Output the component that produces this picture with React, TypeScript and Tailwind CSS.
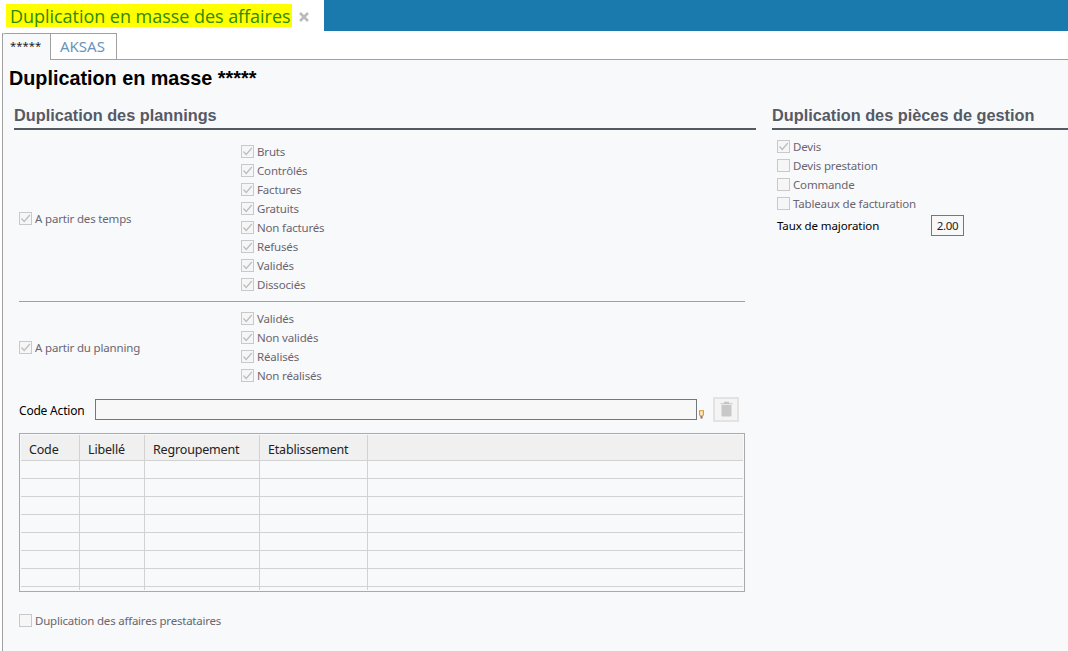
const body = { fontFamily: '"Noto Sans", "Open Sans", sans-serif' };

function Check({ label, checked = true, tight = false }: { label: string; checked?: boolean; tight?: boolean }) {
  return (
    <div className="flex h-[19px] items-center">
      <span className="flex h-[13px] w-[13px] shrink-0 items-center justify-center border border-[#c9c9c9] bg-[#f6f6f6]">
        {checked && (
          <svg width="11" height="11" viewBox="0 0 11 11" fill="none">
            <path d="M1.5 5.5L4.2 8.5L9.8 2" stroke="#bdbdbd" strokeWidth="1.2" />
          </svg>
        )}
      </span>
      <span className={`ml-[3px] whitespace-nowrap pt-[1px] text-[11.5px] text-[#6a6570] ${tight ? "tracking-[-0.22px]" : "tracking-[-0.17px]"}`}>{label}</span>
    </div>
  );
}

function SectionTitle({ children }: { children: string }) {
  return (
    <div className="h-[28px] whitespace-nowrap border-b-2 border-[#555a62] text-[16.3px] font-bold leading-[27px] text-[#555a64]" style={{ fontFamily: '"Liberation Sans", Arial, sans-serif' }}>
      {children}
    </div>
  );
}

const cols = ["w-[59px]", "w-[65px]", "w-[115px]", "w-[108px]", "flex-1"];
const heads = ["Code", "Libellé", "Regroupement", "Etablissement", ""];

function Grid() {
  return (
    <div className="ml-[5px] mt-[11px] h-[159px] w-[726px] overflow-hidden border border-[#a9a9b0] px-[1px] pt-[1px]">
      <div className="flex h-[26px] overflow-hidden border-b border-[#d2d2d2] bg-[#f0f0f0]">
        {heads.map((h, i) => (
          <div key={i} className={`${cols[i]} border-r border-[#d2d2d2] pl-[8px] pt-[2px] text-[12.5px] leading-[25px] tracking-[-0.17px] text-[#222] last:border-r-0`}>
            {h}
          </div>
        ))}
      </div>
      {[0, 1, 2, 3, 4, 5, 6].map((r) => (
        <div key={r} className="flex h-[18px] border-b border-[#d2d2d2]">
          {cols.map((c, i) => (
            <div key={i} className={`${c} border-r border-[#d2d2d2] last:border-r-0`} />
          ))}
        </div>
      ))}
      <div className="flex h-[3px]">
        {cols.map((c, i) => (
          <div key={i} className={`${c} border-r border-[#d2d2d2] last:border-r-0`} />
        ))}
      </div>
    </div>
  );
}

export default function App() {
  return (
    <div className="h-[651px] w-[1068px] overflow-hidden bg-white" style={body}>
      <div className="flex h-[31px]">
        <div className="flex w-[324px] items-start pl-[6px] pt-[4px]">
          <span className="h-[23px] whitespace-nowrap bg-[#ffff00] pl-[4px] pr-[1px] text-[18px] leading-[25px] tracking-[-0.04px] text-[#2e8b00]" style={{ fontFamily: '"Open Sans", sans-serif' }}>
            Duplication en masse des affaires
          </span>
          <svg className="ml-[7px] mt-[8px]" width="10" height="10" viewBox="0 0 10 10">
            <path d="M1 1L9 9M9 1L1 9" stroke="#bbbbbb" strokeWidth="2.6" />
          </svg>
        </div>
        <div className="flex-1 bg-[#1a7aad]" />
      </div>
      <div className="ml-[2px] mt-[2px] h-[618px] border-l border-[#a0a0a0] bg-[#f8f9fb]">
        <div className="flex h-[27px] border-b border-[#a0a0a0] bg-white">
          <div className="h-[27px] w-[48px] rounded-tl-[2px] border-r border-t border-[#a0a0a0] bg-[#f8f9fb] pl-[7px] pt-[1px] text-[11.3px] leading-[22px] text-[#222]">*****</div>
          <div className="h-[26px] w-[66px] border-r border-t border-[#a0a0a0] bg-white pl-[9px] text-[15px] leading-[25px] text-[#6a93bb]">AKSAS</div>
        </div>
        <div className="pl-[6px] pt-[7px] text-[19.8px] font-bold leading-[22px] text-black" style={{ fontFamily: '"Liberation Sans", Arial, sans-serif' }}>
          Duplication en masse *****
        </div>
        <div className="flex pl-[11px] pt-[13px]">
          <div className="w-[742px]">
            <SectionTitle>Duplication des plannings</SectionTitle>
            <div className="w-[731px] pt-[12px]">
              <div className="ml-[5px] flex h-[152px] items-center">
                <div className="w-[222px]"><Check label="A partir des temps" /></div>
                <div>
                  {["Bruts", "Contrôlés", "Factures", "Gratuits", "Non facturés", "Refusés", "Validés", "Dissociés"].map((l) => (
                    <Check key={l} label={l} />
                  ))}
                </div>
              </div>
              <div className="ml-[5px] mt-[7px] border-t border-[#a0a0a0] pt-[7px]">
                <div className="flex h-[76px] items-center">
                  <div className="w-[222px]"><Check label="A partir du planning" /></div>
                  <div>
                    {["Validés", "Non validés", "Réalisés", "Non réalisés"].map((l) => (
                      <Check key={l} label={l} />
                    ))}
                  </div>
                </div>
              </div>
              <div className="ml-[5px] mt-[11px] flex h-[26px] items-center">
                <span className="w-[76px] whitespace-nowrap pt-[3px] text-[12px] tracking-[-0.2px] text-black">Code Action</span>
                <div className="h-[21px] w-[602px] border border-[#777] bg-[#f8f8f8]" />
                <svg className="ml-[2px] mt-[10px]" width="5" height="9" viewBox="0 0 5 9">
                  <path d="M0.6 0.7H4.4V4.5L3.6 6H1.4L0.6 4.5Z" fill="#fdeec8" stroke="#e58f1f" strokeWidth="1.1" />
                  <rect x="1.5" y="6.2" width="2" height="2.3" fill="#6f6f80" />
                </svg>
                <div className="ml-[9px] flex h-[25px] w-[26px] items-center justify-center border-2 border-[#e3e3e3] bg-[#f4f4f4]">
                  <svg width="13" height="16" viewBox="0 0 13 16">
                    <path d="M0.5 2.2H12.5V3.2H0.5Z M4 0.8H9V2.2H4Z" fill="#c4c4c4" />
                    <path d="M1.5 4H11.5V14.5Q11.5 15.5 10.5 15.5H2.5Q1.5 15.5 1.5 14.5Z" fill="#c8c8c8" />
                  </svg>
                </div>
              </div>
              <Grid />
              <div className="ml-[5px] mt-[19px]"><Check label="Duplication des affaires prestataires" checked={false} tight /></div>
            </div>
          </div>
          <div className="ml-[16px] flex-1">
            <SectionTitle>Duplication des pièces de gestion</SectionTitle>
            <div className="pl-[5px] pt-[7px]">
              <Check label="Devis" />
              <Check label="Devis prestation" checked={false} />
              <Check label="Commande" checked={false} />
              <Check label="Tableaux de facturation" checked={false} />
              <div className="mt-[2px] flex h-[21px] items-center">
                <span className="w-[154px] whitespace-nowrap pt-[1px] text-[11.5px] tracking-[-0.1px] text-black">Taux de majoration</span>
                <div className="h-[21px] w-[33px] border border-[#777] bg-[#f8f8f8] text-center text-[11.5px] leading-[19px] tracking-[-0.3px] text-[#222]">2.00</div>
              </div>
            </div>
          </div>
        </div>
      </div>
    </div>
  );
}
